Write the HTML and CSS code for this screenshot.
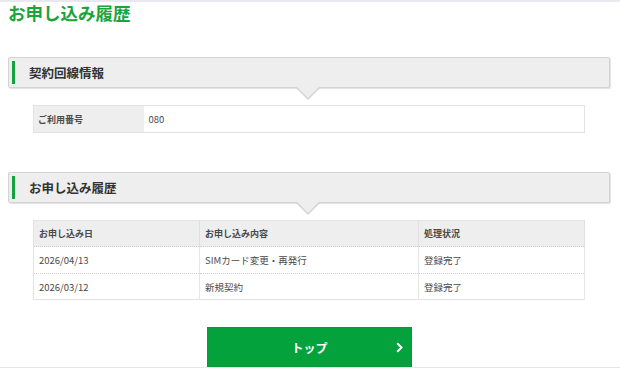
FILE: index.html
```html
<!DOCTYPE html>
<html lang="ja">
<head>
    <meta charset="UTF-8">
    <meta name="viewport" content="width=device-width, initial-scale=1.0">
    <title>お申し込み履歴</title>
    <link rel="stylesheet" href="styles.css">
</head>
<body>
    <div class="page">
        <h1 class="page-title">お申し込み履歴</h1>

        <div class="section">
            <h2 class="sec-head"><span class="bar"></span><span class="sec-title">契約回線情報</span></h2>
            <table class="info">
                <tr>
                    <th class="label">ご利用番号</th>
                    <td>080</td>
                </tr>
            </table>
        </div>

        <div class="section second">
            <h2 class="sec-head"><span class="bar"></span><span class="sec-title">お申し込み履歴</span></h2>
            <table class="history">
                <tr>
                    <th class="c1">お申し込み日</th>
                    <th class="c2">お申し込み内容</th>
                    <th class="c3">処理状況</th>
                </tr>
                <tr>
                    <td>2026/04/13</td>
                    <td>SIMカード変更・再発行</td>
                    <td>登録完了</td>
                </tr>
                <tr>
                    <td>2026/03/12</td>
                    <td>新規契約</td>
                    <td>登録完了</td>
                </tr>
            </table>
        </div>

        <div class="btn-wrap">
            <a class="btn-top" href="#">
                <span></span>
                <span class="btn-text">トップ</span>
                <svg class="chev" width="7" height="11" viewBox="0 0 7 11">
                    <polyline points="1.2,1.2 5.5,5.5 1.2,9.8" fill="none" stroke="#fff" stroke-width="2"/>
                </svg>
            </a>
        </div>
    </div>
    <div class="footer"></div>
</body>
</html>
```

FILE: styles.css
```css
* {
    margin: 0;
    padding: 0;
    box-sizing: border-box;
}

body {
    background-color: #fff;
    font-family: "Noto Sans CJK JP", "Noto Sans", sans-serif;
    color: #333;
    border-top: 2px solid #e8e8f0;
}

.page {
    padding: 0 10px 0 8px;
}

.page-title {
    font-size: 17.5px;
    line-height: 22px;
    font-weight: bold;
    color: #1ba33c;
}

.section {
    margin-top: 33px;
}

.section.second {
    margin-top: 39px;
}

.sec-head {
    position: relative;
    display: flex;
    align-items: stretch;
    height: 31px;
    padding: 3px 3px;
    background-color: #eeeeee;
    border: 1px solid #d3d3d3;
    border-radius: 2px;
    box-shadow: 1px 1px 1px rgba(0, 0, 0, 0.12);
}

.sec-head .bar {
    width: 3px;
    background-color: #12a33a;
}

.sec-title {
    margin-left: 14px;
    font-size: 12.5px;
    line-height: 23px;
    font-weight: bold;
    color: #333;
}

/* 下向きの三角 */
.sec-head::before,
.sec-head::after {
    content: "";
    position: absolute;
    left: 50%;
    border-style: solid;
    border-color: transparent;
}

.sec-head::before {
    top: 30px;
    margin-left: -13px;
    border-width: 12px 12px 0 12px;
    border-top-color: #d3d3d3;
}

.sec-head::after {
    top: 29px;
    margin-left: -12px;
    border-width: 11px 11px 0 11px;
    border-top-color: #eeeeee;
}

table {
    border-collapse: collapse;
    margin: 17px 0 0 25px;
    width: 552px;
    font-size: 9.5px;
    color: #4a4a4a;
}

th, td {
    text-align: left;
    padding: 0 5px;
    font-weight: normal;
}

.info {
    border: 1px solid #e3e3e3;
}

.info th, .info td {
    height: 27px;
}

.info .label {
    width: 110px;
    background-color: #eeeeee;
    font-weight: bold;
    padding-left: 4px;
    font-size: 9px;
}

.info td {
    padding-left: 5px;
}

.history {
    border: 1px solid #e3e3e3;
}

.history th {
    height: 26px;
    background-color: #eeeeee;
    font-weight: bold;
    font-size: 9px;
    border-right: 1px solid #e0e0e0;
}

.history td {
    height: 27px;
    border-top: 1px dotted #cfcfcf;
    border-right: 1px solid #e6e6e6;
}

.history tr:last-child td {
    height: 26px;
}

.history .c1 {
    width: 166px;
}

.history .c2 {
    width: 219px;
}

.btn-wrap {
    display: flex;
    justify-content: center;
    margin-top: 27px;
}

.btn-top {
    display: grid;
    grid-template-columns: 1fr auto 1fr;
    align-items: center;
    width: 205px;
    height: 40px;
    padding: 0 8px 0 9px;
    background-color: #03a23c;
    border: 1px solid #0b9a3a;
    color: #fff;
    text-decoration: none;
}

.btn-text {
    font-size: 12px;
    font-weight: bold;
}

.chev {
    justify-self: end;
}

.footer {
    height: 4px;
    background-color: #e6e6e6;
}
```
